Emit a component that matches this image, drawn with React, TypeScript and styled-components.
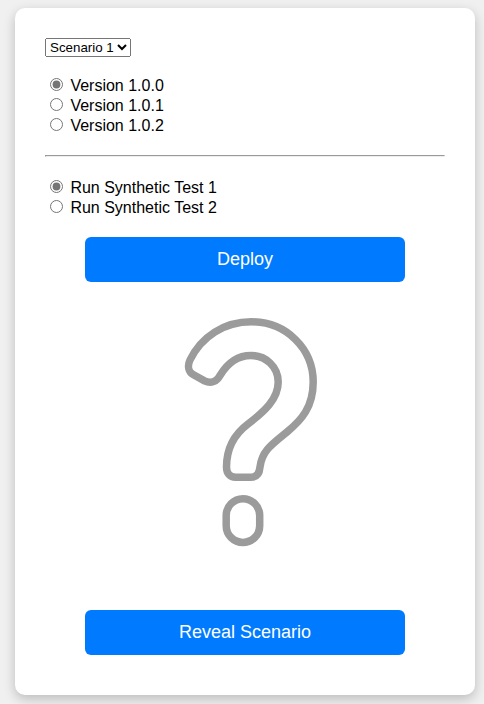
import React from "react";
import styled, { createGlobalStyle } from "styled-components";

const GlobalStyle = createGlobalStyle`
  body {
    margin: 0;
    background: #f0f0f0;
    color: #000;
    font-family: Arial, "Liberation Sans", sans-serif;
    font-size: 16px;
  }
`;

const Page = styled.main`
  box-sizing: border-box;
  height: 704px;
  padding: 8px 9px 9px 15px;
  overflow: hidden;
`;

const Card = styled.section`
  box-sizing: border-box;
  width: 460px;
  height: 687px;
  padding: 30px;
  display: flex;
  flex-direction: column;
  background: #fff;
  border-radius: 10px;
  box-shadow: 0 4px 12px rgba(0, 0, 0, 0.22);
`;

const ScenarioSelect = styled.select`
  align-self: flex-start;
  width: 86px;
  height: 19px;
  margin: 0 0 18px;
  font-family: Arial, "Liberation Sans", sans-serif;
  font-size: 13.333px;
`;

const Options = styled.div`
  display: flex;
  flex-direction: column;
`;

const Option = styled.label`
  display: flex;
  align-items: flex-start;
  height: 20px;
  line-height: 21px;
  white-space: nowrap;
`;

const Radio = styled.input`
  width: 13px;
  height: 13px;
  margin: 3px 7.4px 0 5px;
  accent-color: #757575;
`;

const Divider = styled.hr`
  width: 400px;
  box-sizing: border-box;
  height: 2px;
  margin: 20px 0;
  border: 1px solid;
  border-color: #9a9a9a #eee #eee #9a9a9a;
`;

const ActionButton = styled.button`
  flex: none;
  align-self: center;
  width: 320px;
  height: 45px;
  padding: 0;
  border: 0;
  border-radius: 6px;
  background: #007bff;
  color: #fff;
  font-family: Arial, "Liberation Sans", sans-serif;
  font-size: 18px;
`;

const Figure = styled.div`
  flex: none;
  display: flex;
  justify-content: center;
  height: 328px;
`;

interface RadioListProps {
  name: string;
  items: string[];
}

function RadioList({ name, items }: RadioListProps) {
  return (
    <Options>
      {items.map((item, i) => (
        <Option key={item}>
          <Radio type="radio" name={name} defaultChecked={i === 0} />
          {item}
        </Option>
      ))}
    </Options>
  );
}

const Deploy = styled(ActionButton)`
  margin-top: 20px;
`;

function QuestionMark() {
  return (
    <svg width="400" height="328" viewBox="45 282 400 328" fill="none" stroke="#9b9b9b" strokeWidth="7.5">
      <path d="M251.5 321.8C286 321.8 313.2 348.5 313.2 382C313.2 407 301.5 420 287 432C271 445 262 451 260 467C259.5 473.5 256.5 477.2 251 477.2H235.5C230 477.2 226.5 473.5 226.5 467C226.5 446 236 433 248 424C264.5 411.5 278.2 399 278.2 382C278.2 367 266 355.5 251 355.5C237 355.5 227.5 363 220 375.5C216.8 381.5 211 384 204.5 380.8L193.5 374.8C188.5 372 187.2 366 190 360C201.5 336.5 224 321.8 251.5 321.8Z" />
      <rect x="226.2" y="498.8" width="33.5" height="43.6" rx="16.75" />
    </svg>
  );
}

export default function App() {
  return (
    <>
      <GlobalStyle />
      <Page>
        <Card>
          <ScenarioSelect defaultValue="1" aria-label="Scenario">
            <option value="1">Scenario 1</option>
          </ScenarioSelect>
          <RadioList name="version" items={["Version 1.0.0", "Version 1.0.1", "Version 1.0.2"]} />
          <Divider />
          <RadioList name="test" items={["Run Synthetic Test 1", "Run Synthetic Test 2"]} />
          <Deploy type="button">Deploy</Deploy>
          <Figure>
            <QuestionMark />
          </Figure>
          <ActionButton type="button">Reveal Scenario</ActionButton>
        </Card>
      </Page>
    </>
  );
}
